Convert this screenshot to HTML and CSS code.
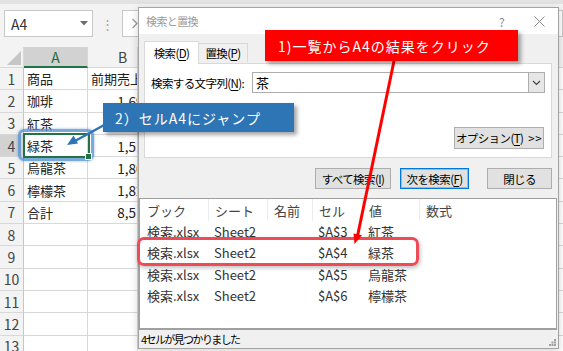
FILE: index.html
```html
<!DOCTYPE html>
<html lang="ja">
<head>
    <meta charset="UTF-8">
    <title>検索と置換</title>
    <link rel="stylesheet" href="styles.css">
</head>
<body>

    <div class="toolbar">
        <div class="namebox">
            <span>A4</span>
            <svg width="8" height="5" viewBox="0 0 8 5"><path d="M0 0H8L4 4.5Z" fill="#6d6d6d"/></svg>
        </div>
        <div class="dots">⋮</div>
        <div class="fx">
            <svg width="8" height="11" viewBox="0 0 8 11"><path d="M1.5 1L6 5.5L1.5 10" fill="none" stroke="#9a9a9a" stroke-width="1.3"/></svg>
        </div>
    </div>

    <div class="sheet">
        <div class="corner"><svg width="14" height="14" viewBox="0 0 14 14"><path d="M14 0V14H0Z" fill="#c6c6c6"/></svg></div>
        <div class="colh active">A</div><div class="colh">B</div><div class="colh rest"></div>

        <div class="rowh">1</div><div class="cell">商品</div><div class="cell">前期売上高</div><div class="cell rest"></div>
        <div class="rowh">2</div><div class="cell">珈琲</div><div class="cell num"><span>1,690</span></div><div class="cell rest"></div>
        <div class="rowh">3</div><div class="cell">紅茶</div><div class="cell num"></div><div class="cell rest"></div>
        <div class="rowh active">4</div><div class="cell">緑茶</div><div class="cell num"><span>1,510</span></div><div class="cell rest"></div>
        <div class="rowh">5</div><div class="cell">烏龍茶</div><div class="cell num"><span>1,800</span></div><div class="cell rest"></div>
        <div class="rowh">6</div><div class="cell">檸檬茶</div><div class="cell num"><span>1,820</span></div><div class="cell rest"></div>
        <div class="rowh">7</div><div class="cell">合計</div><div class="cell num"><span>8,510</span></div><div class="cell rest"></div>
        <div class="rowh">8</div><div class="cell"></div><div class="cell"></div><div class="cell rest"></div>
        <div class="rowh">9</div><div class="cell"></div><div class="cell"></div><div class="cell rest"></div>
        <div class="rowh">10</div><div class="cell"></div><div class="cell"></div><div class="cell rest"></div>
        <div class="rowh">11</div><div class="cell"></div><div class="cell"></div><div class="cell rest"></div>
        <div class="rowh">12</div><div class="cell"></div><div class="cell"></div><div class="cell rest"></div>
        <div class="rowh">13</div><div class="cell"></div><div class="cell"></div><div class="cell rest"></div>
    </div>

    <!-- selected cell A4 and its highlight -->
    <div class="cell-glow"></div>
    <div class="cell-cursor"><span class="handle"></span></div>

    <div class="dialog">
        <div class="titlebar">
            <span class="title">検索と置換</span>
            <span class="help">?</span>
            <svg class="close-x" width="11" height="11" viewBox="0 0 11 11"><path d="M0.5 0.5L10.5 10.5M10.5 0.5L0.5 10.5" stroke="#8a8a8a" stroke-width="1"/></svg>
        </div>

        <div class="dbody">
            <div class="tabs">
                <div class="tab active">検索(<u>D</u>)</div>
                <div class="tab">置換(<u>P</u>)</div>
            </div>
            <div class="panel">
                <div class="findrow">
                    <span class="label">検索する文字列(<u>N</u>):</span>
                    <div class="combo">
                        <span class="value">茶</span>
                        <span class="drop"><svg width="9" height="6" viewBox="0 0 9 6"><path d="M1 1L4.5 4.5L8 1" fill="none" stroke="#444" stroke-width="1.2"/></svg></span>
                    </div>
                </div>
                <div class="optrow">
                    <div class="btn opt">オプション(<u>T</u>)<span class="more">&gt;&gt;</span></div>
                </div>
            </div>
            <div class="actions">
                <div class="btn all">すべて検索(<u>I</u>)</div>
                <div class="btn next">次を検索(<u>F</u>)</div>
                <div class="btn close">閉じる</div>
            </div>
        </div>

        <div class="results">
            <div class="rrow rhead">
                <span>ブック</span><span>シート</span><span>名前</span><span>セル</span><span>値</span><span>数式</span>
            </div>
            <div class="rrow"><span>検索.xlsx</span><span>Sheet2</span><span></span><span>$A$3</span><span>紅茶</span><span></span></div>
            <div class="rrow"><span>検索.xlsx</span><span>Sheet2</span><span></span><span>$A$4</span><span>緑茶</span><span></span></div>
            <div class="rrow"><span>検索.xlsx</span><span>Sheet2</span><span></span><span>$A$5</span><span>烏龍茶</span><span></span></div>
            <div class="rrow"><span>検索.xlsx</span><span>Sheet2</span><span></span><span>$A$6</span><span>檸檬茶</span><span></span></div>
        </div>

        <div class="status">
            <span>4セルが見つかりました</span>
            <svg class="grip" width="7" height="7" viewBox="0 0 7 7" fill="#a0a0a0">
                <rect x="5" y="0" width="2" height="2"/><rect x="2.5" y="2.5" width="2" height="2"/><rect x="5" y="2.5" width="2" height="2"/>
                <rect x="0" y="5" width="2" height="2"/><rect x="2.5" y="5" width="2" height="2"/><rect x="5" y="5" width="2" height="2"/>
            </svg>
        </div>
    </div>

    <!-- annotations -->
    <div class="row-mark"></div>

    <svg class="arrows" width="563" height="351" viewBox="0 0 563 351">
        <path d="M394 61L357.5 236" stroke="#ff0000" stroke-width="3"/>
        <path d="M354.5 244L362 235.2L353.5 233.4Z" fill="#ff0000"/>
        <path d="M106 124L75 141" stroke="#2e75b6" stroke-width="2.5"/>
        <path d="M67 145L78 143.5L73.5 135.5Z" fill="#2e75b6"/>
    </svg>

    <div class="callout red">1)一覧からA4の結果をクリック</div>
    <div class="callout blue">2）セルA4にジャンプ</div>

</body>
</html>
```

FILE: styles.css
```css
body {
    margin: 0;
    width: 563px;
    height: 351px;
    overflow: hidden;
    position: relative;
    background: #fff;
    font-family: "Noto Sans CJK JP", "Noto Sans", sans-serif;
    color: #222;
}

u {
    text-decoration: underline;
    text-underline-offset: 2px;
}

/* ---------- excel ---------- */

.toolbar {
    height: 47px;
    box-sizing: border-box;
    background: #f3f3f3;
    border-top: 4px solid #e2e2e2;
    padding: 6px 0 0 4px;
    display: flex;
    align-items: flex-start;
}

.namebox {
    width: 89px;
    height: 27px;
    box-sizing: border-box;
    background: #fff;
    border: 1px solid #c8c8c8;
    display: flex;
    align-items: center;
    justify-content: space-between;
    padding: 0 4px 0 6px;
    font-size: 14px;
    color: #333;
}

.dots {
    width: 29px;
    height: 27px;
    line-height: 27px;
    text-align: center;
    color: #a5a5a5;
    font-size: 13px;
}

.fx {
    flex: 1;
    height: 27px;
    box-sizing: border-box;
    background: #fff;
    border: 1px solid #c8c8c8;
    display: flex;
    align-items: center;
    padding-left: 8px;
}

/* column B is cut where the dialog starts */
.sheet {
    display: grid;
    grid-template-columns: 24px 64px 50px 1fr;
    grid-template-rows: 21px;
    grid-auto-rows: 22.3px;
    font-size: 13px;
}

.sheet > div {
    box-sizing: border-box;
    border-right: 1px solid #d8d8d8;
    border-bottom: 1px solid #d8d8d8;
    white-space: nowrap;
    overflow: hidden;
    display: flex;
    align-items: center;
}

.corner {
    background: #f3f3f3;
    justify-content: flex-end;
    align-items: flex-end !important;
    padding: 0 2px 2px 0;
}

.colh {
    background: #f3f3f3;
    justify-content: center;
    color: #444;
    font-size: 14px;
}

.colh.active {
    background: #d2d2d2;
    color: #1e6b41;
    border-bottom: 2px solid #217346 !important;
}

.colh:nth-child(3) {
    padding-left: 20px;
}

.rowh {
    background: #f3f3f3;
    justify-content: center;
    color: #444;
    font-size: 14px;
    border-right-color: #c6c6c6 !important;
}

.rowh.active {
    background: #d2d2d2;
}

.cell {
    padding-left: 3px;
}

.cell.num {
    justify-content: flex-end;
    font-size: 13.5px;
}

.cell.num span {
    margin-right: -14px;
}

.cell.rest,
.colh.rest {
    border-right: none !important;
}

.cell-cursor {
    position: absolute;
    left: 23px;
    top: 133px;
    width: 67px;
    height: 25px;
    box-sizing: border-box;
    border: 2px solid #217346;
}

.cell-cursor .handle {
    position: absolute;
    right: -4px;
    bottom: -4px;
    width: 5px;
    height: 5px;
    background: #217346;
    border: 1px solid #fff;
}

.cell-glow {
    position: absolute;
    left: 18px;
    top: 129px;
    width: 76px;
    height: 32px;
    box-sizing: border-box;
    border: 3px solid rgba(79, 140, 205, 0.75);
    border-radius: 6px;
    box-shadow: 0 0 3px rgba(79, 140, 205, 0.6);
}

/* ---------- dialog ---------- */

.dialog {
    position: absolute;
    left: 138px;
    top: 7px;
    width: 421px;
    height: 342px;
    box-sizing: border-box;
    border: 1px solid #a3a3a3;
    background: #f0f0f0;
    display: flex;
    flex-direction: column;
    font-size: 11.5px;
    letter-spacing: -0.6px;
    color: #000;
    box-shadow: 0 2px 8px rgba(0, 0, 0, 0.18);
}

.titlebar {
    height: 26px;
    background: #fff;
    display: flex;
    align-items: center;
    padding: 0 13px 0 7px;
}

.title {
    color: #9a9a9a;
    font-size: 11px;
    flex: 1;
}

.help {
    color: #8a8a8a;
    font-size: 12px;
    margin-right: 30px;
}

.dbody {
    padding: 7px 6px 9px 5px;
}

.tabs {
    height: 22px;
    display: flex;
    align-items: flex-end;
}

.tab {
    box-sizing: border-box;
    height: 19px;
    width: 49px;
    border: 1px solid #d9d9d9;
    border-bottom: none;
    border-left: none;
    display: flex;
    align-items: center;
    justify-content: center;
    margin-bottom: 1px;
}

.tab.active {
    width: 55px;
    height: 23px;
    background: #fff;
    border-left: 1px solid #d9d9d9;
    margin-bottom: -1px;
    position: relative;
}

.panel {
    height: 95px;
    box-sizing: border-box;
    background: #fff;
    border: 1px solid #d9d9d9;
    padding: 8px 6px 8px 6px;
    display: flex;
    flex-direction: column;
    justify-content: space-between;
}

.findrow {
    display: flex;
    align-items: center;
    height: 21px;
}

.label {
    width: 101px;
    white-space: nowrap;
}

.combo {
    flex: 1;
    height: 21px;
    box-sizing: border-box;
    border: 1px solid #adadad;
    display: flex;
    align-items: center;
    justify-content: space-between;
    font-size: 13px;
}

.combo .value {
    padding-left: 3px;
}

.combo .drop {
    width: 16px;
    height: 19px;
    box-sizing: border-box;
    background: #e6e6e6;
    border-left: 1px solid #adadad;
    display: flex;
    align-items: center;
    justify-content: center;
}

.optrow {
    display: flex;
    justify-content: flex-end;
}

.btn {
    box-sizing: border-box;
    height: 22px;
    background: #e1e1e1;
    border: 1px solid #adadad;
    display: flex;
    align-items: center;
    justify-content: center;
    white-space: nowrap;
}

.btn.opt {
    width: 90px;
    margin-right: 1px;
}

.btn .more {
    margin-left: 5px;
    letter-spacing: 0.5px;
}

.actions {
    margin-top: 10px;
    height: 21px;
    display: flex;
    justify-content: flex-end;
}

.actions .btn {
    height: 21px;
}

.btn.all {
    width: 76px;
}

.btn.next {
    width: 69px;
    margin-left: 9px;
    border-color: #0078d7;
    box-shadow: inset 0 0 0 1px rgba(0, 120, 215, 0.35);
}

.btn.close {
    width: 65px;
    margin-left: 18px;
}

.results {
    height: 132px;
    box-sizing: border-box;
    background: #fff;
    border: 1px solid #a0a0a0;
    border-bottom-width: 2px;
    margin-right: 1px;
    font-size: 13px;
    letter-spacing: 0;
    color: #333;
}

.rrow {
    display: grid;
    grid-template-columns: 68px 59px 45px 50px 57px 1fr;
    height: 21.3px;
    align-items: center;
}

.rrow span {
    padding-left: 6px;
    white-space: nowrap;
}

.rrow span:first-child {
    padding-left: 7px;
}

.rhead {
    height: 22px;
    align-items: stretch;
    color: #444;
}

.rhead span {
    display: flex;
    align-items: center;
}

.rhead span + span {
    border-left: 1px solid #ececec;
}

.status {
    flex: 1;
    display: flex;
    align-items: center;
    justify-content: space-between;
    padding: 0 2px 0 2px;
    font-size: 11px;
    letter-spacing: -1.6px;
}

.grip {
    align-self: flex-end;
    margin-bottom: 2px;
}

/* ---------- annotations ---------- */

.row-mark {
    position: absolute;
    left: 137px;
    top: 237px;
    width: 282px;
    height: 29px;
    box-sizing: border-box;
    border: 3px solid #ef4b57;
    border-radius: 7px;
    box-shadow: 1px 2px 4px rgba(0, 0, 0, 0.25);
}

.arrows {
    position: absolute;
    left: 0;
    top: 0;
}

.callout {
    position: absolute;
    box-sizing: border-box;
    color: #fff;
    font-size: 14px;
    letter-spacing: 1px;
    display: flex;
    align-items: center;
    white-space: nowrap;
    box-shadow: 3px 3px 4px rgba(0, 0, 0, 0.35);
}

.callout.red {
    left: 265px;
    top: 30px;
    width: 253px;
    height: 31px;
    background: #ff0000;
    padding-left: 13px;
}

.callout.blue {
    left: 103px;
    top: 103px;
    width: 191px;
    height: 29px;
    background: #2e75b6;
    padding-left: 12px;
}
```
